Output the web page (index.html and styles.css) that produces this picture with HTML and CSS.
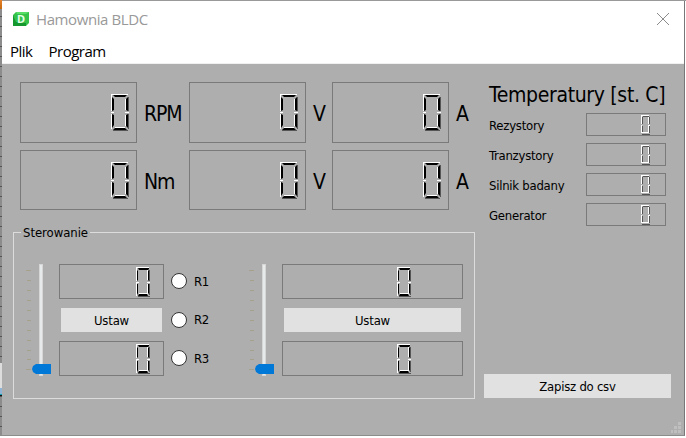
FILE: index.html
```html
<!DOCTYPE html>
<html lang="pl">
<head>
<meta charset="utf-8">
<title>Hamownia BLDC</title>
<link rel="stylesheet" href="styles.css">
</head>
<body>
<svg class="defs" aria-hidden="true">
  <symbol id="zero-lg" viewBox="0 0 18 37">
    <path fill="#555" d="M17 3h1v14h-1zM17 20h1v15h-1zM2 36h15v1H2z"/>
    <path fill="#fff" d="M0 0h1v17H0zM1 0h16v1H1zM0 20h1v15H0zM14 5h1v11h-1zM14 21h1v11h-1zM4 33h10v1H4zM0 18h3v1H0zM14 18h4v1h-4z"/>
    <path fill="#000" d="M2 1h14l-2 2H4zM1 3l2 2v11l-2 1zM15 5l2-2v14l-2-1zM1 20l2 1v10l-2 3zM15 21l2-1v14l-2-2zM4 34h10l2 2H2z"/>
  </symbol>
  <symbol id="zero-md" viewBox="0 0 14 30">
    <path fill="#555" d="M13 3h1v11h-1zM13 17h1v11h-1zM2 29h12v1H2z"/>
    <path fill="#fff" d="M0 0h1v14H0zM1 0h12v1H1zM0 15h3v1H0zM11 15h3v1h-3zM0 16h1v13H0zM11 3h1v10h-1zM11 17h1v10h-1zM3 26h8v1H3z"/>
    <path fill="#000" d="M2 1h11v1l-1 1H3zM1 3l1 1v9l-1 1zM12 4l1-1v11l-1-1zM1 17h1v9l-1 2zM12 17h1v10l-1-1zM3 27h8l1 2H2z"/>
  </symbol>
  <symbol id="zero-sm" viewBox="0 0 9 20">
    <path fill="#555" d="M2 1h6v1H2zM1 2h1v7H1zM8 2h1v7H8zM1 11h1v7H1zM8 11h1v7H8zM1 19h8v1H1z"/>
    <path fill="#fff" d="M0 0h8v1H0zM0 1h1v8H0zM0 10h1v8H0zM7 2h1v7H7zM7 10h2v1H7zM7 11h1v6H7zM1 17h7v1H1z"/>
  </symbol>
</svg>
<main class="window">
  <header class="titlebar">
    <svg class="logo" viewBox="0 0 16 14"><path fill="#35c24b" d="M3 0h13v11l-3 3H0V3z"/><path fill="#15992e" d="M0 3l3 7 10 1v3H0z"/><path fill="#59df68" d="M3 0h13l-3 2H4z"/></svg>
    <span class="logo-letter">D</span>
    <h1 class="title">Hamownia BLDC</h1>
    <svg class="close" viewBox="0 0 12 12"><path d="M0 0l12 12M12 0l-12 12" stroke="#8b8b8b" fill="none"/></svg>
  </header>
  <nav class="menu"><span class="plik">Plik</span><span class="program">Program</span></nav>
  <div class="content">
    <div class="left">
      <section class="readouts">
        <div class="lcd lg"><svg><use href="#zero-lg"/></svg></div><span class="unit rpm">RPM</span>
        <div class="lcd lg"><svg><use href="#zero-lg"/></svg></div><span class="unit">V</span>
        <div class="lcd lg"><svg><use href="#zero-lg"/></svg></div><span class="unit">A</span>
        <div class="lcd lg"><svg><use href="#zero-lg"/></svg></div><span class="unit">Nm</span>
        <div class="lcd lg"><svg><use href="#zero-lg"/></svg></div><span class="unit">V</span>
        <div class="lcd lg"><svg><use href="#zero-lg"/></svg></div><span class="unit">A</span>
      </section>
      <fieldset class="group">
        <legend>Sterowanie</legend>
        <div class="controls">
          <svg class="slider" viewBox="0 0 25 112"><path d="M0 6.5h5M1 16.5h4M1 26.5h4M1 36.5h4M1 46.5h4M1 56.5h4M1 66.5h4M1 76.5h4M1 86.5h4M1 95.5h4M0 105.5h5" stroke="#a5a18c"/><path fill="#d6d6d6" d="M13 0h4v112h-4z"/><path fill="#e7eaea" d="M14 1h2v110h-2z"/><path fill="#0078d7" d="M10 100h15v10H10l-3-2-1-3 1-3z"/></svg>
          <div class="channel narrow">
            <div class="lcd md"><svg><use href="#zero-md"/></svg></div>
            <button>Ustaw</button>
            <div class="lcd md"><svg><use href="#zero-md"/></svg></div>
          </div>
          <div class="radios">
            <label><i></i>R1</label><label><i></i>R2</label><label><i></i>R3</label>
          </div>
          <svg class="slider" viewBox="0 0 25 112"><path d="M0 6.5h5M1 16.5h4M1 26.5h4M1 36.5h4M1 46.5h4M1 56.5h4M1 66.5h4M1 76.5h4M1 86.5h4M1 95.5h4M0 105.5h5" stroke="#a5a18c"/><path fill="#d6d6d6" d="M13 0h4v112h-4z"/><path fill="#e7eaea" d="M14 1h2v110h-2z"/><path fill="#0078d7" d="M10 100h15v10H10l-3-2-1-3 1-3z"/></svg>
          <div class="channel wide">
            <div class="lcd md"><svg><use href="#zero-md"/></svg></div>
            <button>Ustaw</button>
            <div class="lcd md"><svg><use href="#zero-md"/></svg></div>
          </div>
        </div>
      </fieldset>
    </div>
    <aside class="right">
      <h2>Temperatury [st. C]</h2>
      <div class="temp"><span class="t1">Rezystory</span><div class="lcd sm"><svg><use href="#zero-sm"/></svg></div></div>
      <div class="temp"><span class="t2">Tranzystory</span><div class="lcd sm"><svg><use href="#zero-sm"/></svg></div></div>
      <div class="temp"><span class="t3">Silnik badany</span><div class="lcd sm"><svg><use href="#zero-sm"/></svg></div></div>
      <div class="temp"><span class="t4">Generator</span><div class="lcd sm"><svg><use href="#zero-sm"/></svg></div></div>
      <button class="save">Zapisz do csv</button>
    </aside>
    <svg class="grip" viewBox="0 0 10 11"><path fill="#bfbfbf" d="M7 0h3v3H7zM7 4h3v3H7zM3 4h3v3H3zM7 8h3v3H7zM3 8h3v3H3zM0 8h2v3H0z"/></svg>
  </div>
</main>
</body>
</html>
```

FILE: styles.css
```css
* { box-sizing: border-box; }
body {
  margin: 0;
  width: 686px;
  height: 438px;
  overflow: hidden;
  padding: 1px 1px 2px 2px;
  background:
    linear-gradient(#e8822a, #c46a10) 0 0 / 2px 9px no-repeat,
    linear-gradient(#ddd, #ddd) 0 363px / 2px 25px no-repeat,
    linear-gradient(#8fb4d6, #8fb4d6) 0 388px / 2px 6px no-repeat,
    linear-gradient(#10a0b0 1px, #111 1px) 0 394px / 2px 2px no-repeat,
    linear-gradient(#999, #999) 0 0 / 686px 1px no-repeat,
    linear-gradient(#fff, #fff) 685px 0 / 1px 438px no-repeat,
    linear-gradient(#fff, #fff) 0 436px / 686px 2px no-repeat,
    repeating-linear-gradient(#8c8c8c 0 6px, #555 6px 7px, #8c8c8c 7px 10px);
  font: 13px "DejaVu Sans Condensed", "DejaVu Sans", sans-serif;
  font-stretch: condensed;
  color: #000;
}
.defs { position: absolute; width: 0; height: 0; }
.window {
  width: 683px;
  height: 435px;
  background: #aeaeae;
  border-right: 1px solid #777;
  border-bottom: 1px solid #8c8c8c;
}
.titlebar {
  position: relative;
  display: flex;
  align-items: center;
  height: 37px;
  padding: 0 15px 0 11px;
  background: #fff;
}
.logo { width: 16px; height: 14px; margin-top: -1px; }
.logo-letter {
  position: absolute;
  left: 11px;
  top: 11px;
  width: 16px;
  text-align: center;
  font: bold 11px/14px "Noto Sans", sans-serif;
  color: #e5ffe8;
}
.title {
  margin: -2px auto 0 7px;
  font: 15px/20px "Open Sans", sans-serif;
  letter-spacing: -.4px;
  color: #999;
}
.close { width: 12px; height: 12px; margin-top: -1px; }
.menu {
  display: flex;
  gap: 16px;
  height: 26px;
  padding-left: 8px;
  background: #fff;
  border-bottom: 1px solid #f0f0f0;
  font: 15px/26px "Open Sans", sans-serif;
  letter-spacing: -.5px;
}
.content {
  position: relative;
  display: flex;
  height: 371px;
  padding: 18px 0 0 11px;
}
.left { width: 462px; }
.readouts {
  display: grid;
  grid-template-columns: 117px 52px 117px 26px 117px 26px;
  grid-template-rows: 61px 60px;
  row-gap: 7px;
  padding-left: 7px;
}
.lcd {
  display: flex;
  border: 1px solid #7a7a7a;
}
.lcd svg { display: block; margin-left: auto; }
.lg svg { width: 18px; height: 37px; margin-top: 11px; margin-right: 7px; }
.unit {
  padding-left: 7px;
  font-size: 21px;
  line-height: 65px;
  letter-spacing: -1.1px;
  white-space: nowrap;
}
.group {
  position: relative;
  height: 167px;
  margin: 22px 0 0;
  padding: 0;
  border: 1px solid #dcdcdc;
  min-width: 0;
}
legend {
  position: absolute;
  top: -8px;
  left: 7px;
  padding: 0 2px;
  background: #aeaeae;
  line-height: 15px;
  letter-spacing: -.05px;
}
.controls { display: flex; padding: 31px 0 0 12px; }
.slider { width: 25px; height: 112px; }
.channel {
  display: flex;
  flex-direction: column;
  justify-content: space-between;
  height: 112px;
  margin-left: 8px;
}
.narrow { width: 105px; }
.wide { width: 181px; }
.md { height: 35px; }
.md svg { width: 14px; height: 30px; margin-top: 2px; margin-right: 13px; }
.wide .md svg { margin-right: 51px; }
button {
  height: 24px;
  margin: 0 2px;
  padding: 1px 0 0;
  border: 0;
  background: #e1e1e1;
  color: #000;
  font: inherit;
  line-height: 24px;
  letter-spacing: -.2px;
}
.radios {
  display: flex;
  flex-direction: column;
  gap: 22.5px;
  width: 85px;
  padding: 9px 0 0 7px;
}
label {
  display: flex;
  align-items: center;
  gap: 7px;
  height: 16px;
  letter-spacing: -.5px;
}
label i {
  width: 16px;
  height: 16px;
  border: 1px solid #333;
  border-radius: 50%;
  background: #fff;
}
.right { width: 187px; margin-left: 9px; }
h2 {
  margin: -2px 0 3px 5px;
  font-size: 21px;
  font-weight: normal;
  line-height: 30px;
  letter-spacing: -.33px;
  white-space: nowrap;
}
.temp {
  display: flex;
  justify-content: space-between;
  height: 23px;
  margin: 0 5px 7px;
  line-height: 25px;
  letter-spacing: -.25px;
}
.sm { width: 80px; height: 23px; }
.sm svg { width: 9px; height: 20px; margin-top: 1px; margin-right: 15px; }
.save { display: block; width: 187px; margin: 148px 0 0; letter-spacing: -.25px; }
.grip { position: absolute; right: 3px; bottom: 2px; width: 10px; height: 11px; }
```
